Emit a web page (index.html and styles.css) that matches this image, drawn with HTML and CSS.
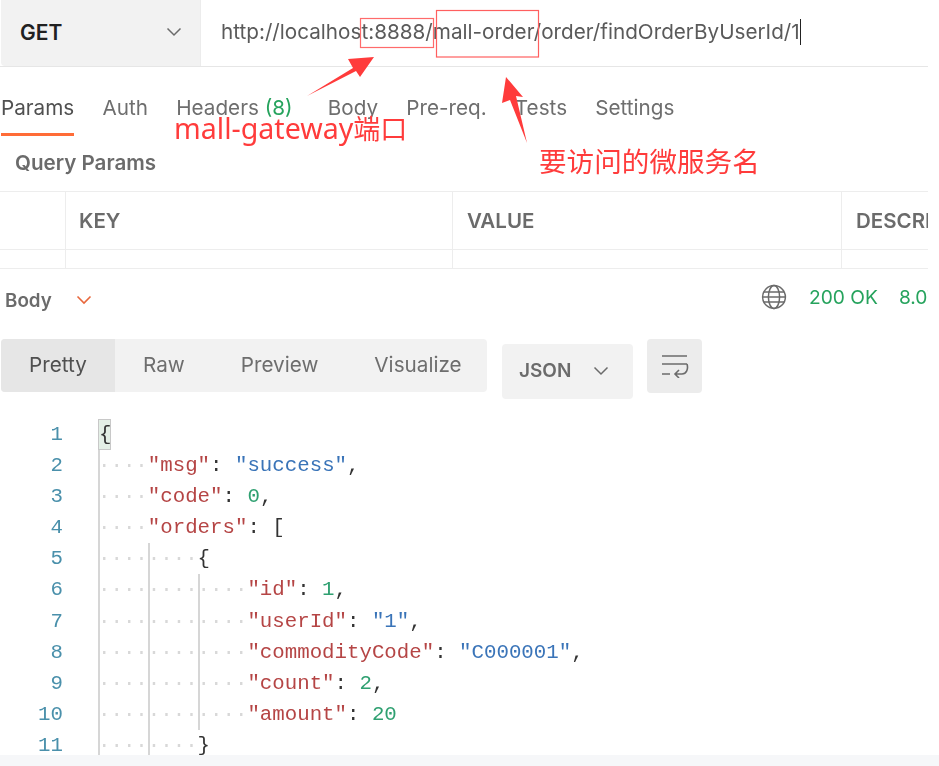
FILE: index.html
```html
<!DOCTYPE html>
<html lang="zh-CN">
<head>
<meta charset="utf-8">
<title>Postman request</title>
<link rel="stylesheet" href="styles.css">
</head>
<body>
<div class="app">
  <div class="urlbar">
    <div class="method"><span>GET</span>
      <svg class="chev-dark" width="16" height="10" viewBox="0 0 16 10"><path d="M1.5 1.5 8 8l6.5-6.5" fill="none" stroke="#6b6b6b" stroke-width="1.5"/></svg>
    </div>
    <div class="url"><span class="caret">http://localhost:8888/mall-order/order/findOrderByUserId/1</span></div>
  </div>
  <div class="tabs">
    <span class="tab active">Params</span>
    <span class="tab">Auth</span>
    <span class="tab headers">Headers <em>(8)</em></span>
    <span class="tab">Body</span>
    <span class="tab">Pre-req.</span>
    <span class="tab">Tests</span>
    <span class="tab">Settings</span>
  </div>
  <div class="qp">Query Params</div>
  <div class="table">
    <div class="row head">
      <div class="c c0"></div><div class="c c1">KEY</div><div class="c c2">VALUE</div><div class="c c3">DESCRIPTION</div>
    </div>
    <div class="row empty">
      <div class="c c0"></div><div class="c c1"></div><div class="c c2"></div><div class="c c3"></div>
    </div>
  </div>
  <div class="resp">
    <div class="resp-left"><span>Body</span>
      <svg width="16" height="10" viewBox="0 0 16 10"><path d="M1.5 1.5 8 8l6.5-6.5" fill="none" stroke="#e8673c" stroke-width="1.6"/></svg>
    </div>
    <div class="resp-right">
      <svg class="globe" width="26" height="26" viewBox="0 0 26 26" fill="none" stroke="#6b6b6b" stroke-width="1.5"><circle cx="13" cy="13" r="11.4"/><ellipse cx="13" cy="13" rx="5.6" ry="11.4"/><path d="M3 8h20M3 18h20M1.6 13h22.8"/></svg>
      <span class="ok">200 OK</span><span class="ok size">8.07 s</span>
    </div>
  </div>
  <div class="toolbar">
    <div class="seg">
      <span class="s on">Pretty</span><span class="s raw">Raw</span><span class="s prev">Preview</span><span class="s vis">Visualize</span>
    </div>
    <div class="json"><span>JSON</span>
      <svg width="16" height="10" viewBox="0 0 16 10"><path d="M1.5 1.5 8 8l6.5-6.5" fill="none" stroke="#6b6b6b" stroke-width="1.5"/></svg>
    </div>
    <div class="wrap">
      <svg width="28" height="24" viewBox="0 0 28 24" fill="none" stroke="#6b6b6b" stroke-width="1.6"><path d="M1 2h25M1 10h25M1 20h8"/><path d="M26 10c1.5 5-.5 10-5 10h-7M18 16l-4 4 4 4"/></svg>
    </div>
  </div>
  <div class="code">
    <div class="line"><span class="n">1</span><span class="t"><span class="bm">{</span></span></div>
    <div class="line"><span class="n">2</span><span class="t"><span class="i">····</span><span class="k">"msg"</span>: <span class="s1">"success"</span>,</span></div>
    <div class="line"><span class="n">3</span><span class="t"><span class="i">····</span><span class="k">"code"</span>: <span class="v">0</span>,</span></div>
    <div class="line"><span class="n">4</span><span class="t"><span class="i">····</span><span class="k">"orders"</span>: [</span></div>
    <div class="line"><span class="n">5</span><span class="t"><span class="i">····</span><span class="i">····</span>{</span></div>
    <div class="line"><span class="n">6</span><span class="t"><span class="i">····</span><span class="i">····</span><span class="i">····</span><span class="k">"id"</span>: <span class="v">1</span>,</span></div>
    <div class="line"><span class="n">7</span><span class="t"><span class="i">····</span><span class="i">····</span><span class="i">····</span><span class="k">"userId"</span>: <span class="s1">"1"</span>,</span></div>
    <div class="line"><span class="n">8</span><span class="t"><span class="i">····</span><span class="i">····</span><span class="i">····</span><span class="k">"commodityCode"</span>: <span class="s1">"C000001"</span>,</span></div>
    <div class="line"><span class="n">9</span><span class="t"><span class="i">····</span><span class="i">····</span><span class="i">····</span><span class="k">"count"</span>: <span class="v">2</span>,</span></div>
    <div class="line"><span class="n">10</span><span class="t"><span class="i">····</span><span class="i">····</span><span class="i">····</span><span class="k">"amount"</span>: <span class="v">20</span></span></div>
    <div class="line"><span class="n">11</span><span class="t"><span class="i">····</span><span class="i">····</span>}</span></div>
  </div>

  <svg class="marks" width="928" height="160" viewBox="0 0 928 160">
    <rect x="360.5" y="18.5" width="73" height="29" fill="none" stroke="#ff6b6b" stroke-width="1.2"/>
    <rect x="436.5" y="10.5" width="102" height="46.5" fill="none" stroke="#ff5f5f" stroke-width="1.2"/>
    <polygon points="307,96 353,68 348,59 374,57 360,77 356,71" fill="#ff3b3b"/>
    <polygon points="506,77 523,97 516,96 527,143 510,100 502,103" fill="#ff3b3b"/>
  </svg>
  <div class="note n1">mall-gateway<span class="cjk">端口</span></div>
  <div class="note n2">要访问的微服务名</div>
</div>
<div class="foot"></div>
</body>
</html>
```
FILE: styles.css
```css
* { box-sizing: border-box; }
html, body { margin: 0; padding: 0; background: #fff; height: 766px; overflow: hidden; }
body { font-family: Inter, "Noto Sans", sans-serif; color: #6b6b6b; }
.app { position: relative; width: 928px; height: 755px; overflow: hidden; filter: blur(0.45px); }
.foot { height: 11px; background: #f6f7f9; }

.urlbar { display: flex; height: 67px; border-bottom: 1px solid #e6e6e6; padding-left: 1px; }
.method { width: 200px; display: flex; align-items: center; justify-content: space-between; padding: 0 18px 2px 19px; background: #f2f2f2; border-right: 1px solid #ececec; border-radius: 0 0 0 4px; font-size: 21px; font-weight: 600; color: #212121; }
.url { flex: 1; display: flex; align-items: center; padding: 0 0 2px 20px; font-size: 20.7px; color: #5a5a5a; white-space: nowrap; }
.caret { border-right: 1.5px solid #222; line-height: 26px; }

.tabs { display: flex; gap: 28.2px; padding: 26px 0 0 1px; height: 70px; font-size: 20.7px; color: #6e6e6e; }
.tab { height: 43px; line-height: 30px; white-space: nowrap; }
.tab.active { color: #505050; border-bottom: 3px solid #ff6c37; }
.tab em { font-style: normal; color: #26a35d; }
.headers { margin-right: 7px; }

.qp { height: 54px; padding: 14px 0 0 15px; font-size: 20.6px; font-weight: 600; color: #6b6b6b; line-height: 24px; }

.table { border-top: 1px solid #ededed; }
.row { display: flex; border-bottom: 1px solid #ededed; }
.row.head { height: 58px; }
.row.empty { height: 19px; }
.c { border-right: 1px solid #ededed; flex: none; }
.c0 { width: 66px; }
.c1 { width: 387px; }
.c2 { width: 389px; }
.c3 { flex: 1; border-right: 0; overflow: hidden; white-space: nowrap; }
.head .c { padding: 16px 0 0 14px; font-size: 20.5px; font-weight: 600; line-height: 26px; color: #6b6b6b; }
.head .c1 { padding-left: 13px; }

.resp { display: flex; justify-content: space-between; align-items: center; height: 64px; }
.resp-left { display: flex; align-items: center; gap: 24px; padding: 0 0 2px 5px; font-size: 18.8px; font-weight: 600; }
.resp-right { display: flex; align-items: center; white-space: nowrap; width: 167px; padding-bottom: 8px; font-size: 19.2px; color: #26a35d; }
.globe { margin-right: 22px; flex: none; }
.ok { flex: none; margin-right: 21px; }

.toolbar { display: flex; align-items: flex-start; height: 81px; padding: 6px 0 0 1px; }
.seg { display: flex; width: 486px; height: 53px; background: #f2f2f2; border-radius: 4px; font-size: 20.7px; line-height: 51px; color: #6e6e6e; }
.s { flex: none; }
.s.on { width: 114px; text-align: center; background: #e6e6e6; color: #505050; border-radius: 4px 0 0 4px; }
.raw { margin-left: 28px; }
.prev { margin-left: 56px; }
.vis { margin-left: 56px; }
.json { display: flex; align-items: center; justify-content: space-between; width: 131px; height: 55px; margin: 5px 0 0 15px; padding: 0 24px 2px 17px; background: #f2f2f2; border-radius: 4px; font-size: 19px; font-weight: 600; color: #6b6b6b; }
.wrap { display: flex; align-items: center; justify-content: center; width: 55px; height: 54px; margin-left: 14px; background: #ececec; border-radius: 4px; }

.code { font-family: "Liberation Mono", "DejaVu Sans Mono", monospace; font-size: 20.75px; line-height: 31.1px; color: #333; margin-top: 5px; }
.line { display: flex; height: 31.1px; white-space: pre; }
.n { width: 63px; flex: none; text-align: right; color: #4a90ab; }
.t { margin-left: 35px; display: flex; white-space: pre; }
.i { width: 49.8px; flex: none; box-shadow: inset 2px 0 #d6d6d6; color: #d8d8d8; overflow: hidden; }
.bm { width: 13px; text-align: center; background: #e4efe6; border: 1px solid #c8c8c8; line-height: 29px; height: 31px; }
.k { color: #b54545; }
.s1 { color: #3a74b8; }
.v { color: #2fa071; }

.marks { position: absolute; left: 0; top: 0; pointer-events: none; }
.note { position: absolute; font-family: "Noto Sans", "Noto Sans CJK SC", sans-serif; color: #ff3b3b; white-space: nowrap; }
.n1 { left: 174px; top: 109px; font-size: 28.6px; line-height: 38px; }
.cjk { font-family: "Noto Sans CJK SC", sans-serif; font-size: 27px; }
.n2 { left: 539px; top: 141px; font-family: "Noto Sans CJK SC", sans-serif; font-size: 27.6px; line-height: 38px; }
```
